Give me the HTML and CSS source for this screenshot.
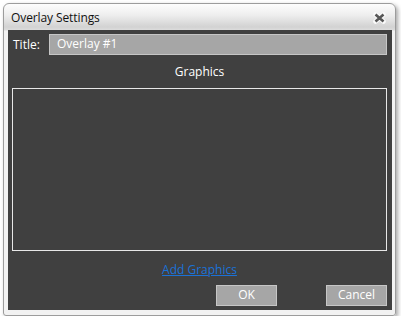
FILE: index.html
```html
<!DOCTYPE html>
<html>
<head>
<meta charset="utf-8">
<link rel="stylesheet" href="styles.css">
</head>
<body>
<div class="window">
  <div class="titlebar">
    <span class="title-text">Overlay Settings</span>
    <svg class="close" width="13" height="12" viewBox="0 0 13 12">
      <path d="M2.5 2.5 L10.5 9.5 M10.5 2.5 L2.5 9.5" stroke="#fafafa" stroke-width="4.6" stroke-linecap="round" fill="none"/>
      <path d="M2.5 2.5 L10.5 9.5 M10.5 2.5 L2.5 9.5" stroke="#575757" stroke-width="2.6" stroke-linecap="butt" fill="none"/>
    </svg>
  </div>
  <div class="content">
    <div class="title-row">
      <span class="label">Title:</span>
      <div class="input">Overlay #1</div>
    </div>
    <div class="section-label">Graphics</div>
    <div class="graphics-box"></div>
    <div class="link-row"><a class="link" href="#">Add Graphics</a></div>
    <div class="buttons">
      <div class="btn">OK</div>
      <div class="btn">Cancel</div>
    </div>
  </div>
</div>
</body>
</html>
```
FILE: styles.css
```css
html, body {
  margin: 0;
  padding: 0;
  background: #ffffff;
}
body {
  font-family: "Open Sans", "Noto Sans", sans-serif;
  font-size: 12px;
}
.window {
  box-sizing: border-box;
  margin: 3px 0 0 3px;
  width: 393px;
  height: 313px;
  border: 1px solid #9c9c9c;
  border-radius: 6px 6px 3px 3px;
  background: linear-gradient(#fdfdfd 0px, #eeeeee 11px, #d2d2d2 23px, #dcdcdc 26px, #f2f2f2 27px, #f2f2f2 100%);
  box-shadow: 2px 2px 4px rgba(0,0,0,0.35);
  padding: 0 3px 5px 4px;
  display: flex;
  flex-direction: column;
}
.titlebar {
  height: 26px;
  display: flex;
  align-items: center;
  justify-content: space-between;
  padding: 0 6px 0 3px;
  color: #111111;
}
.title-text {
  font-size: 12px;
  margin-top: 1px;
  letter-spacing: -0.1px;
}
.close {
  display: block;
  margin-top: 2px;
}
.content {
  box-sizing: border-box;
  height: 280px;
  background: #404040;
  padding: 4px 5px 4px 4px;
  display: flex;
  flex-direction: column;
  color: #ffffff;
}
.title-row {
  height: 21px;
  display: flex;
  align-items: center;
}
.label {
  width: 36px;
  padding-left: 1px;
  font-size: 12px;
}
.input {
  box-sizing: border-box;
  flex: 1;
  height: 21px;
  background: #a6a6a6;
  border: 1px solid #c6c6c6;
  padding-left: 7px;
  line-height: 18px;
  font-size: 12px;
}
.section-label {
  margin-top: 9px;
  height: 16px;
  line-height: 16px;
  text-align: center;
}
.graphics-box {
  box-sizing: border-box;
  margin-top: 8px;
  height: 163px;
  border: 1px solid #e8e8e8;
}
.link-row {
  margin-top: 11px;
  height: 16px;
  line-height: 16px;
  text-align: center;
}
.link {
  color: #1a72d8;
  text-decoration: underline;
}
.buttons {
  margin-top: 7px;
  height: 21px;
  display: flex;
  justify-content: flex-end;
  gap: 49px;
}
.btn {
  box-sizing: border-box;
  width: 61px;
  height: 21px;
  background: #a6a6a6;
  border: 1px solid #c6c6c6;
  text-align: center;
  line-height: 18px;
  color: #ffffff;
}
```
